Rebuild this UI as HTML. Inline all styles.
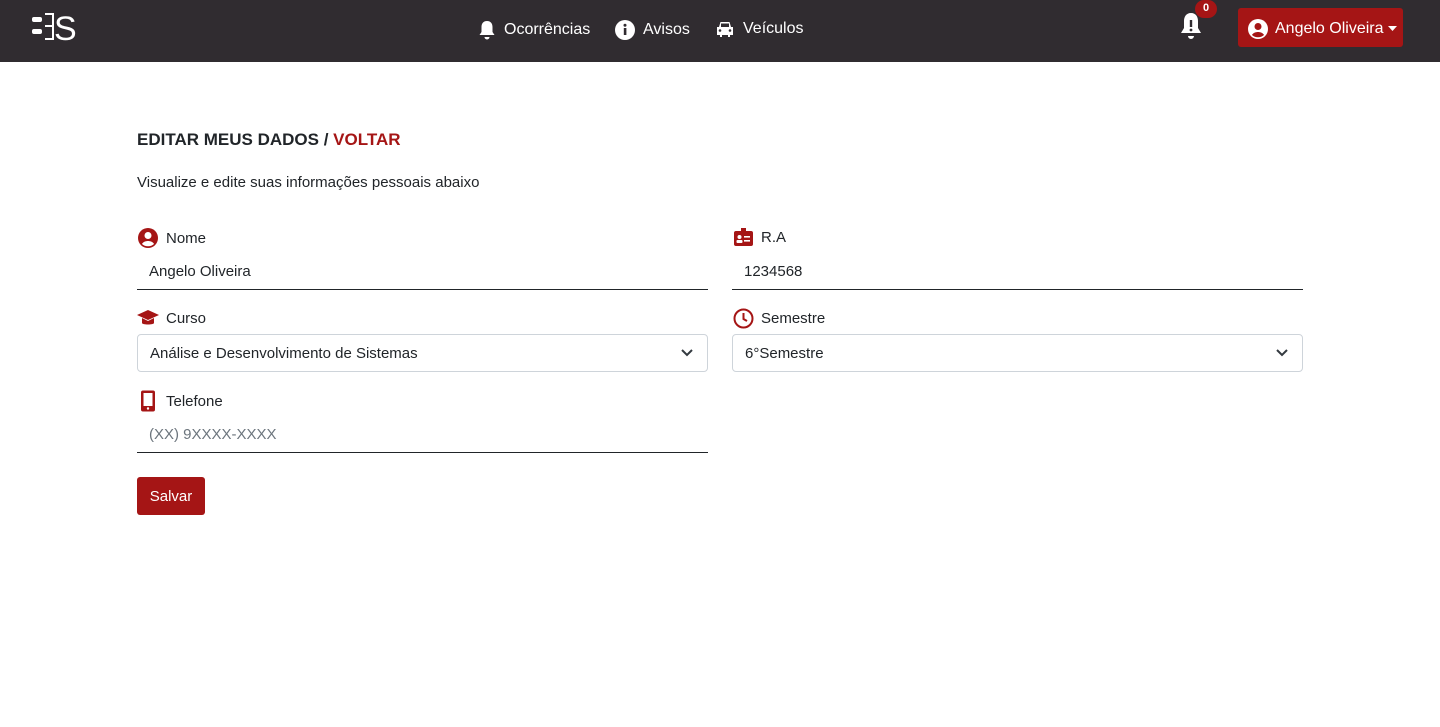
<!DOCTYPE html>
<html><head><meta charset="utf-8">
<style>
*{box-sizing:border-box;margin:0;padding:0}
body{width:1440px;height:727px;background:#fff;font-family:"Liberation Sans",sans-serif;color:#212529;position:relative;overflow:hidden}
nav{position:absolute;left:0;top:0;width:1440px;height:62px;background:#302c30}
.nl{position:absolute;top:20px;color:#fff;font-size:16px;display:flex;align-items:center;gap:8px}
.user{position:absolute;left:1238px;top:8px;width:165px;height:39px;background:#a51515;border-radius:3px;color:#fff;font-size:16px;display:flex;align-items:center;padding-left:10px;gap:7px;padding-top:2px}
.badge{position:absolute;left:1195px;top:0;width:22px;height:18px;border-radius:9px;background:#a51515;color:#fff;font-size:11px;font-weight:bold;text-align:center;line-height:17px}
h1{position:absolute;left:137px;top:130px;font-size:17px;font-weight:bold;color:#212529}
h1 span{color:#a51515}
.sub{position:absolute;left:137px;top:174px;font-size:15px}
.lbl{position:absolute;font-size:15px;display:flex;align-items:center;gap:7px}
.inp{position:absolute;height:37px;border-bottom:1px solid #212529;font-size:15px;padding-left:12px;line-height:38px}
.sel{position:absolute;height:38px;border:1px solid #ced4da;border-radius:4px;font-size:15px;padding-left:12px;line-height:38px}
.sel svg{position:absolute;right:14px;top:14px}
.btn{position:absolute;left:137px;top:477px;width:68px;height:38px;background:#a51515;color:#fff;border-radius:3px;font-size:15px;text-align:center;line-height:40px}
</style></head><body>
<nav>
 <svg style="position:absolute;left:32px;top:12px" width="48" height="32" viewBox="0 0 48 32">
  <rect x="0" y="5" width="10" height="5" rx="2" fill="#fff"/><rect x="0" y="17" width="10" height="5" rx="2" fill="#fff"/>
  <path d="M13 2H21V27H13M13 14H21" stroke="#fff" stroke-width="2" fill="none"/>
  <text x="22" y="28" fill="#fff" font-family="Liberation Sans" font-size="34">S</text>
 </svg>
 <div class="nl" style="left:478px"><svg width="18" height="20" viewBox="0 0 18 20"><path d="M9 1C5 1 3.5 4 3.5 7V12L1.5 15H16.5L14.5 12V7C14.5 4 13 1 9 1Z M6.5 17A2.5 2.5 0 0 0 11.5 17Z" fill="#fff"/></svg>Ocorrências</div>
 <div class="nl" style="left:615px"><svg width="20" height="20"><circle cx="10" cy="10" r="10" fill="#fff"/><rect x="8.8" y="8" width="2.6" height="7" fill="#302c30"/><circle cx="10" cy="5.3" r="1.5" fill="#302c30"/></svg>Avisos</div>
 <div class="nl" style="left:715px"><svg width="20" height="18" viewBox="0 0 20 18"><path d="M4 7L5.5 2H14.5L16 7H18V15H15V17H13V15H7V17H5V15H2V7Z" fill="#fff"/><rect x="6" y="3.5" width="8" height="3.5" fill="#302c30"/><circle cx="5" cy="10.5" r="1.3" fill="#302c30"/><circle cx="15" cy="10.5" r="1.3" fill="#302c30"/></svg>Veículos</div>
 <svg style="position:absolute;left:1178px;top:12px" width="26" height="28" viewBox="0 0 26 28"><path d="M13 1C8 1 6 5 6 9V16L3 21H23L20 16V9C20 5 18 1 13 1Z M10 24A3 3 0 0 0 16 24Z" fill="#fff"/><rect x="11.8" y="8" width="2.4" height="7" fill="#302c30"/><circle cx="13" cy="18" r="1.4" fill="#302c30"/></svg>
 <div class="badge">0</div>
 <div class="user"><svg width="20" height="20"><circle cx="10" cy="10" r="10" fill="#fff"/><circle cx="10" cy="7.5" r="3.5" fill="#a51515"/><path d="M4 16C6 12 14 12 16 16A9 9 0 0 1 4 16Z" fill="#a51515"/></svg>Angelo Oliveira<svg width="9" height="5" style="margin-left:-3px"><path d="M0 0H9L4.5 5Z" fill="#fff"/></svg></div>
</nav>
<h1>EDITAR MEUS DADOS / <span>VOLTAR</span></h1>
<div class="sub">Visualize e edite suas informações pessoais abaixo</div>

<div class="lbl" style="left:137px;top:227px"><svg width="22" height="22"><circle cx="11" cy="11" r="10" fill="#a51515"/><circle cx="11" cy="8.5" r="3.5" fill="#fff"/><path d="M5 17C7 13 15 13 17 17A9 9 0 0 1 5 17Z" fill="#fff"/></svg>Nome</div>
<div class="inp" style="left:137px;top:253px;width:571px">Angelo Oliveira</div>
<div class="lbl" style="left:733px;top:227px"><svg width="21" height="20" viewBox="0 0 21 20"><rect x="1" y="4" width="19" height="15" rx="2" fill="#a51515"/><rect x="8" y="1" width="5" height="5" fill="#a51515"/><circle cx="6.5" cy="10" r="2" fill="#fff"/><rect x="3.5" y="13" width="6" height="3" rx="1" fill="#fff"/><rect x="11" y="9" width="6" height="1.6" fill="#fff"/><rect x="11" y="13" width="6" height="1.6" fill="#fff"/></svg>R.A</div>
<div class="inp" style="left:732px;top:253px;width:571px">1234568</div>

<div class="lbl" style="left:137px;top:308px"><svg width="22" height="20" viewBox="0 0 22 20"><path d="M11 2L22 7L11 12L0 7Z" fill="#a51515"/><path d="M5 10V15C5 17 17 17 17 15V10L11 13Z" fill="#a51515"/></svg>Curso</div>
<div class="sel" style="left:137px;top:334px;width:571px">Análise e Desenvolvimento de Sistemas<svg width="12" height="8"><path d="M1 1L6 6L11 1" stroke="#343a40" stroke-width="2" fill="none"/></svg></div>
<div class="lbl" style="left:733px;top:308px"><svg width="21" height="21"><circle cx="10.5" cy="10.5" r="9" stroke="#a51515" stroke-width="2" fill="none"/><path d="M10.5 5V11L14 13" stroke="#a51515" stroke-width="2" fill="none"/></svg>Semestre</div>
<div class="sel" style="left:732px;top:334px;width:571px">6°Semestre<svg width="12" height="8"><path d="M1 1L6 6L11 1" stroke="#343a40" stroke-width="2" fill="none"/></svg></div>

<div class="lbl" style="left:137px;top:390px"><svg width="22" height="22" viewBox="0 0 22 22"><rect x="4" y="0.5" width="14" height="21" rx="2" fill="#a51515"/><rect x="6.5" y="3" width="9" height="13" fill="#fff"/><circle cx="11" cy="18.5" r="1.2" fill="#fff"/></svg>Telefone</div>
<div class="inp" style="left:137px;top:416px;width:571px;color:#6c757d">(XX) 9XXXX-XXXX</div>

<div class="btn">Salvar</div>
</body></html>
